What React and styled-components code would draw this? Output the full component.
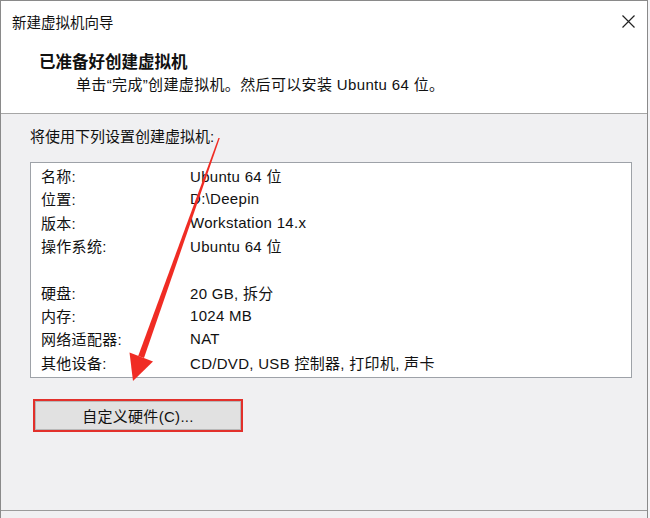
import styled, { createGlobalStyle } from 'styled-components';

const GlobalStyle = createGlobalStyle`
  html, body {
    margin: 0;
    padding: 0;
    background: #f4f4f6;
  }
  body {
    font-family: "Liberation Sans", "Noto Sans CJK SC", sans-serif;
    color: #111;
  }
`;

const Window = styled.div`
  position: relative;
  width: 646px;
  height: 518px;
  border: 1px solid #8a8a8a;
  border-bottom: none;
  display: flex;
  flex-direction: column;
  overflow: hidden;
  background: #f0f0f2;
`;

const Header = styled.div`
  height: 112px;
  background: #fff;
  border-bottom: 1px solid #a6a6a6;
  display: flex;
  flex-direction: column;
`;

const TitleBar = styled.div`
  height: 40px;
  display: flex;
  align-items: center;
  justify-content: space-between;
  padding: 0 10px 0 11px;
  font-size: 14.5px;
`;

const CloseButton = styled.div`
  width: 16px;
  height: 16px;
  display: flex;
  align-items: center;
  justify-content: center;
  margin-right: 1px;
`;

const Heading = styled.div`
  margin: 10px 0 0 38px;
  font-size: 16.5px;
  font-weight: 700;
  line-height: 22px;
`;

const SubText = styled.div`
  margin: 1px 0 0 75px;
  font-size: 15px;
  line-height: 22px;
  letter-spacing: 0.35px;
`;

const Body = styled.div`
  flex: 1;
  display: flex;
  flex-direction: column;
  padding: 12px 0 0 29px;
  border-bottom: 1px solid #9a9a9a;
`;

const Intro = styled.div`
  font-size: 15px;
  line-height: 22px;
`;

const SummaryBox = styled.div`
  margin-top: 14px;
  width: 602px;
  height: 216px;
  background: #fff;
  border: 1px solid #9ea2a8;
  padding: 1px 0 0 10px;
  box-sizing: border-box;
`;

const Row = styled.div`
  display: grid;
  grid-template-columns: 149px 1fr;
  height: 23.3px;
  align-items: center;
  font-size: 15px;
  letter-spacing: 0.3px;
`;

const CustomButton = styled.div`
  margin: 21px 0 0 3px;
  width: 210px;
  height: 33px;
  box-sizing: border-box;
  border: 2px solid #e2302b;
  background: #e1e1e1;
  box-shadow: inset 0 0 0 1px #b8b8b8;
  display: flex;
  align-items: center;
  justify-content: center;
  font-size: 15px;
  letter-spacing: 0.3px;
`;

const Footer = styled.div`
  height: 8px;
  background: #f0f0f2;
`;

const Overlay = styled.svg`
  position: absolute;
  left: 0;
  top: 0;
  pointer-events: none;
`;

const rows = [
  ['名称:', 'Ubuntu 64 位'],
  ['位置:', 'D:\\Deepin'],
  ['版本:', 'Workstation 14.x'],
  ['操作系统:', 'Ubuntu 64 位'],
  ['', ''],
  ['硬盘:', '20 GB, 拆分'],
  ['内存:', '1024 MB'],
  ['网络适配器:', 'NAT'],
  ['其他设备:', 'CD/DVD, USB 控制器, 打印机, 声卡'],
];

const App = () => {
  return (
    <>
      <GlobalStyle />
      <Window>
        <Header>
          <TitleBar>
            <span>新建虚拟机向导</span>
            <CloseButton>
              <svg width="13" height="13" viewBox="0 0 13 13">
                <path d="M0.5 0.5 L12.5 12.5 M12.5 0.5 L0.5 12.5" stroke="#222" strokeWidth="1.2" />
              </svg>
            </CloseButton>
          </TitleBar>
          <Heading>已准备好创建虚拟机</Heading>
          <SubText>单击“完成”创建虚拟机。然后可以安装 Ubuntu 64 位。</SubText>
        </Header>

        <Body>
          <Intro>将使用下列设置创建虚拟机:</Intro>
          <SummaryBox>
            {rows.map(([label, value], i) => (
              <Row key={i}>
                <span>{label}</span>
                <span>{value}</span>
              </Row>
            ))}
          </SummaryBox>
          <CustomButton>自定义硬件(C)...</CustomButton>
        </Body>
        <Footer />

        {/* red annotation arrow */}
        <Overlay width="646" height="518" viewBox="0 0 646 518">
          <polygon points="217.4,137 218.8,137 143,357 137.2,355" fill="#f02c24" />
          <polygon points="128.5,351.5 152,360.5 132,380" fill="#f02c24" />
        </Overlay>
      </Window>
    </>
  );
};

export default App;
